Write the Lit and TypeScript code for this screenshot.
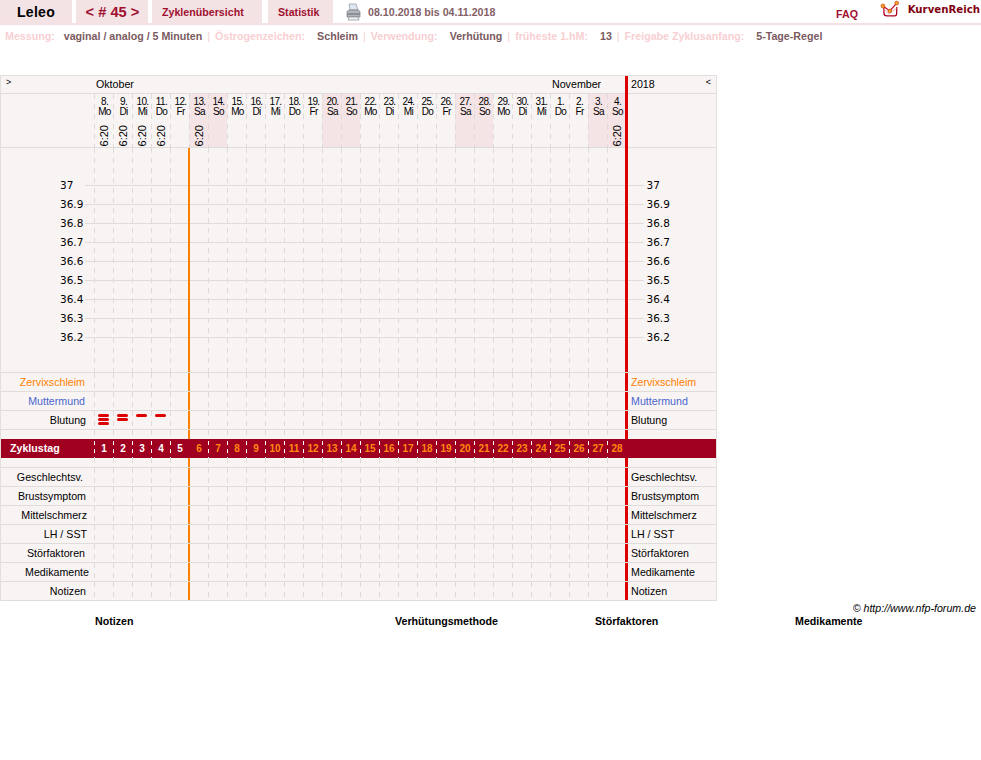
import { LitElement, html, css, svg } from 'lit';
import { customElement } from 'lit/decorators.js';

const DAYS = ['Mo', 'Di', 'Mi', 'Do', 'Fr', 'Sa', 'So'];
const COLS = 28;
const TEMPS = ['37', '36.9', '36.8', '36.7', '36.6', '36.5', '36.4', '36.3', '36.2'];
const TIMES = [0, 1, 2, 3, 5, 27];
const BLEED = [3, 2, 1, 1];

// label + distance of its right end to the first day column
const TOP_ROWS: [string, number, string][] = [
  ['Zervixschleim', 9, 'orange'],
  ['Muttermund', 9, 'blue'],
  ['Blutung', 8, ''],
];
const BOTTOM_ROWS: [string, number][] = [
  ['Geschlechtsv.', 11],
  ['Brustsymptom', 8],
  ['Mittelschmerz', 7],
  ['LH / SST', 7],
  ['Störfaktoren', 9],
  ['Medikamente', 5],
  ['Notizen', 8],
];

const META: [string, string][] = [
  ['Messung:', 'vaginal / analog / 5 Minuten'],
  ['Östrogenzeichen:', 'Schleim'],
  ['Verwendung:', 'Verhütung'],
  ['früheste 1.hM:', '13'],
  ['Freigabe Zyklusanfang:', '5-Tage-Regel'],
];

function dayLabel(i: number) {
  const d = new Date(2018, 9, 8 + i);
  return { num: d.getDate() + '.', name: DAYS[i % 7] };
}

@customElement('app-root')
export class AppRoot extends LitElement {
  static styles = css`
    :host {
      display: block;
      width: 981px;
      font-family: 'Liberation Sans', Arial, sans-serif;
      font-size: 10.67px;
      color: #000;
    }

    .nav {
      display: flex;
      height: 25px;
      box-sizing: border-box;
      border-bottom: 2px solid #f4e1e4;
      align-items: stretch;
    }
    .tab {
      display: flex;
      align-items: center;
      justify-content: center;
      background: #f4e3e5;
      color: #a01030;
      font-weight: bold;
      margin-right: 4px;
    }
    .tab.name { width: 72px; color: #000; font-size: 14px; letter-spacing: 0.3px; }
    .tab.cycle { width: 71px; padding-left: 1px; color: #a01030; font-size: 14.67px; }
    .tab.list { width: 100px; padding-left: 10px; justify-content: flex-start; margin-right: 6px; }
    .tab.stat { width: 55px; padding-left: 10px; justify-content: flex-start; margin-right: 13px; }
    .printer { width: 15px; height: 18px; align-self: center; margin-right: 7px; }
    .range { align-self: center; color: #846068; font-weight: bold; }
    .faq {
      margin-left: auto;
      margin-right: 22px;
      align-self: flex-end;
      padding-bottom: 3px;
      color: #a01030;
      font-weight: bold;
    }
    .logo { display: flex; align-items: flex-start; margin-right: 1px; width: 100px; }
    .logo svg { width: 20px; height: 18px; margin-right: 8px; }
    .logo span {
      font-family: 'DejaVu Sans', sans-serif;
      font-size: 10.2px;
      font-weight: bold;
      color: #800010;
      line-height: 12px;
      margin-top: 4px;
      white-space: nowrap;
    }

    .meta {
      display: flex;
      height: 22px;
      align-items: center;
      padding-left: 5px;
      margin-bottom: 28px;
      font-weight: bold;
      white-space: nowrap;
    }
    .meta .k { color: #f8cfd2; margin-right: 12px; }
    .meta .k.first { margin-right: 9px; }
    .meta .v { color: #7a5a60; }
    .meta .sep { color: #f8cfd2; font-weight: normal; margin: 0 5px; }

    .table {
      width: 717px;
      box-sizing: border-box;
      border: 1px solid #e4dfdf;
      border-bottom: none;
      background: #f9f4f4;
    }
    .row {
      display: grid;
      grid-template-columns: 93px repeat(28, 19px) 1fr;
      height: 19px;
      box-sizing: border-box;
      border-bottom: 1px solid #e0dcdc;
      line-height: 18px;
    }
    .row.month { height: 18px; line-height: 17px; }
    .row.head { height: 54px; }
    .row.gap-top { height: 9px; border-bottom: none; }
    .row.gap { height: 10px; }
    .row.band {
      background: #a00020;
      border-bottom: none;
      color: #fff;
      font-weight: bold;
      line-height: 19px;
    }

    .arrow { font-size: 9px; line-height: 13px; padding-left: 5px; }
    .mname { padding-left: 2px; }
    .oct { grid-column: span 24; }
    .nov { grid-column: span 4; }
    .lbl { text-align: right; white-space: nowrap; }
    .orange { color: #ff8000; }
    .blue { color: #4a66cc; }

    .cell {
      background: repeating-linear-gradient(to bottom, #dedada 0 5px, transparent 5px 10px) left top / 1px 100% no-repeat;
    }
    .cell.now {
      margin-left: -1px;
      border-left: 2px solid #ff8000;
      background: none;
    }
    .right {
      margin-left: -1px;
      border-left: 3px solid #dd0000;
      padding-left: 3px;
      white-space: nowrap;
    }
    .right.joined { margin-bottom: -1px; }
    .year { display: flex; justify-content: space-between; padding-right: 5px; }

    .day {
      display: flex;
      flex-direction: column;
      align-items: center;
      padding-top: 3px;
      padding-left: 2px;
      font-size: 10px;
      line-height: 10px;
      letter-spacing: -0.6px;
      white-space: nowrap;
    }
    .day.we {
      background:
        repeating-linear-gradient(to bottom, #dedada 0 5px, transparent 5px 10px) left top / 1px 100% no-repeat,
        #f4e4e6;
    }
    .time {
      writing-mode: vertical-rl;
      transform: rotate(180deg);
      margin-top: auto;
      margin-bottom: 1px;
      margin-left: -2px;
      font-size: 11px;
      line-height: 12px;
      letter-spacing: 0;
    }

    .chart { display: block; width: 715px; height: 224px; }
    .chart-row { height: 225px; border-bottom: 1px solid #e0dcdc; box-sizing: border-box; }
    .chart text { font-family: 'DejaVu Sans', sans-serif; font-size: 10.5px; fill: #000; }

    .bleed {
      display: flex;
      flex-direction: column;
      align-items: center;
      gap: 1px;
      padding-top: 3px;
    }
    .bleed i { display: block; width: 11px; height: 3px; border-radius: 2px; background: #dd0000; }

    .band-label { padding-left: 9px; }
    .num {
      text-align: center;
      font-size: 10px;
      padding-left: 1px;
      background: repeating-linear-gradient(to bottom, #fff 0 4px, transparent 4px 8px) left 2px / 1px 100% no-repeat;
    }
    .num.plain { background: none; }
    .num.late { color: #ff8a10; }

    .credit {
      height: 14px;
      line-height: 14px;
      text-align: right;
      padding-right: 5px;
      font-style: italic;
    }
    .notes {
      display: grid;
      grid-template-columns: 300px 200px 200px 1fr;
      padding-left: 95px;
      font-weight: bold;
      line-height: 12px;
    }
  `;

  private cells() {
    return Array.from({ length: COLS }, (_, i) =>
      html`<div class="cell ${i === 5 ? 'now' : ''}"></div>`
    );
  }

  private chart() {
    const xs = Array.from({ length: COLS }, (_, i) => 94 + 19 * i);
    return html`
      <svg class="chart" viewBox="1 148 715 224">
        ${xs.filter((x) => x !== 189).map(
          (x) => svg`<line x1=${x + 0.5} y1="148" x2=${x + 0.5} y2="372" stroke="#dedada" stroke-dasharray="5 5" />`
        )}
        ${TEMPS.map((t, i) => {
          const y = 185.5 + 19 * i;
          return svg`
            <line x1="85" y1=${y} x2="625" y2=${y} stroke="#e0dcdc" />
            <line x1="628" y1=${y} x2="644" y2=${y} stroke="#e0dcdc" />
            <text x="60" y=${y + 3.5}>${t}</text>
            <text x="646.5" y=${y + 3.5}>${t}</text>
          `;
        })}
        <rect x="188" y="148" width="2" height="224" fill="#ff8000" />
        <rect x="625" y="148" width="3" height="224" fill="#dd0000" />
      </svg>
    `;
  }

  render() {
    return html`
      <div class="nav">
        <div class="tab name">Leleo</div>
        <div class="tab cycle">&lt; # 45 &gt;</div>
        <div class="tab list">Zyklenübersicht</div>
        <div class="tab stat">Statistik</div>
        <svg class="printer" viewBox="0 0 15 18">
          <path d="M3 1h7l2 6H4z" fill="#dfe8f2" stroke="#8d97a6" stroke-width=".7" />
          <path d="M1 8.500 3 7h9l2 1.500V14H1z" fill="#b4b8bd" stroke="#777" stroke-width=".7" />
          <rect x="1" y="10" width="13" height="2" fill="#8b8f95" />
          <path d="M3 14h9l1 3H2z" fill="#eef0f2" stroke="#8a8e94" stroke-width=".7" />
        </svg>
        <div class="range">08.10.2018 bis 04.11.2018</div>
        <div class="faq">FAQ</div>
        <div class="logo">
          <svg viewBox="0 0 20 18">
            <path d="M4 8v5c0 2 1 3 3 3h8c1.500 0 2-1 2-3V7" fill="none" stroke="#b00020" stroke-width="1.300" />
            <path d="M4 9l5 5 8-6" fill="none" stroke="#e8a0a8" stroke-width=".8" />
            <path d="M3 6l7 5 7-8" fill="none" stroke="#c01030" stroke-width="1.300" />
            <circle cx="3" cy="6" r="2" fill="#f2a020" stroke="#c03010" stroke-width=".6" />
            <circle cx="10" cy="11" r="1.900" fill="#f2a020" stroke="#c03010" stroke-width=".6" />
            <circle cx="17" cy="3" r="2" fill="#f2a020" stroke="#c03010" stroke-width=".6" />
          </svg>
          <span>KurvenReich</span>
        </div>
      </div>

      <div class="meta">
        ${META.map(
          ([k, v], i) => html`
            ${i > 0 ? html`<span class="sep">|</span>` : ''}
            <span class="k ${i === 0 ? 'first' : ''}">${k}</span><span class="v">${v}</span>
          `
        )}
      </div>

      <div class="table">
        <div class="row month">
          <div class="arrow">&gt;</div>
          <div class="mname oct">Oktober</div>
          <div class="mname nov">November</div>
          <div class="right joined year"><span>2018</span><span class="arrow">&lt;</span></div>
        </div>

        <div class="row head">
          <div></div>
          ${Array.from({ length: COLS }, (_, i) => {
            const d = dayLabel(i);
            return html`
              <div class="cell day ${i % 7 >= 5 ? 'we' : ''}">
                <span>${d.num}</span>
                <span>${d.name}</span>
                ${TIMES.includes(i) ? html`<span class="time">6:20</span>` : ''}
              </div>
            `;
          })}
          <div class="right joined"></div>
        </div>

        <div class="chart-row">${this.chart()}</div>

        ${TOP_ROWS.map(
          ([label, pad, color]) => html`
            <div class="row">
              <div class="lbl ${color}" style="padding-right:${pad}px">${label}</div>
              ${label === 'Blutung'
                ? Array.from({ length: COLS }, (_, i) => html`
                    <div class="cell ${i === 5 ? 'now' : ''} ${i < BLEED.length ? 'bleed' : ''}">
                      ${Array.from({ length: BLEED[i] ?? 0 }, () => html`<i></i>`)}
                    </div>
                  `)
                : this.cells()}
              <div class="right ${color}">${label}</div>
            </div>
          `
        )}

        <div class="row gap-top"><div></div>${this.cells()}<div class="right"></div></div>

        <div class="row band">
          <div class="band-label">Zyklustag</div>
          ${Array.from({ length: COLS }, (_, i) => html`
            <div class="num ${i === 5 ? 'plain' : ''} ${i >= 5 ? 'late' : ''}">${i + 1}</div>
          `)}
          <div></div>
        </div>

        <div class="row gap"><div></div>${this.cells()}<div class="right"></div></div>

        ${BOTTOM_ROWS.map(
          ([label, pad]) => html`
            <div class="row">
              <div class="lbl" style="padding-right:${pad}px">${label}</div>
              ${this.cells()}
              <div class="right">${label}</div>
            </div>
          `
        )}
      </div>

      <div class="credit">© http://www.nfp-forum.de</div>
      <div class="notes">
        <div>Notizen</div>
        <div>Verhütungsmethode</div>
        <div>Störfaktoren</div>
        <div>Medikamente</div>
      </div>
    `;
  }
}
